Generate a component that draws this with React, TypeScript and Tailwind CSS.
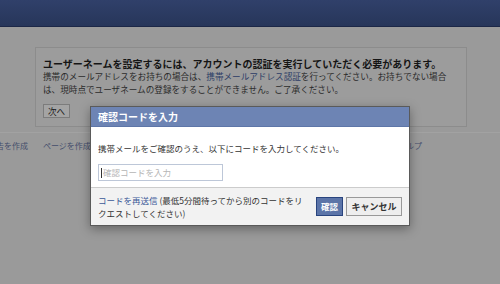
import React from 'react';

const font = { fontFamily: '"Noto Sans CJK JP", "Noto Sans", sans-serif' };

export default function App() {
  return (
    <div className="relative w-[500px] h-[284px] overflow-hidden bg-[#9a9a9a]" style={font}>
      {/* Top bar */}
      <div className="h-[27px] bg-gradient-to-b from-[#30406a] to-[#27365a] border-b border-[#1c2747]" />

      {/* Page content (dimmed) */}
      <div className="pt-[20px]">
        <div className="ml-[35px] w-[432px] h-[80px] border border-[#8c8c8c] bg-[#9c9c9c] pl-[7px] pt-[9px]">
          <div className="text-[10px] font-bold leading-[13px] text-[#151515] whitespace-nowrap">
            ユーザーネームを設定するには、アカウントの認証を実行していただく必要があります。
          </div>
          <div className="text-[8.6px] leading-[13px] text-[#2b2b2b] whitespace-nowrap">
            携帯のメールアドレスをお持ちの場合は、<span className="text-[#2d3d66]">携帯メールアドレス認証</span>を行ってください。お持ちでない場合
            <br />
            は、現時点でユーザネームの登録をすることができません。ご了承ください。
          </div>
          <div className="mt-[6px] inline-flex items-center h-[14px] px-[4px] border border-[#7c7c7c] bg-[#a4a4a4] text-[8.6px] leading-none text-[#1a1a1a]">
            次へ
          </div>
        </div>

        {/* Footer links */}
        <div className="mt-[5px] border-t border-[#a2a2a2] pt-[3px] h-[24px] flex items-center text-[8px] text-[#454e6c] whitespace-nowrap">
          <span className="ml-[-4px]">告を作成</span>
          <span className="ml-[15px]">ページを作成</span>
          <span className="ml-auto mr-[78px]">ヘルプ</span>
        </div>
      </div>

      {/* Dialog */}
      <div className="absolute left-[90px] top-[106px] w-[320px] border border-[#5a5a5a] bg-white shadow-[0_3px_10px_rgba(0,0,0,0.35)]">
        <div className="h-[20px] bg-[#6d84b4] border-b border-[#5e76a8] pl-[7px] flex items-center text-[10px] font-bold text-white">
          確認コードを入力
        </div>
        <div className="pl-[7px] pt-[15px] pb-[6px]">
          <div className="text-[8.5px] leading-[12px] text-[#333]">
            携帯メールをご確認のうえ、以下にコードを入力してください。
          </div>
          <div className="mt-[10px] w-[125px] h-[17px] border border-[#bdc7d8] flex items-center pl-[2px]">
            <span className="w-[1px] h-[10px] bg-[#333]" />
            <span className="ml-[1px] text-[8.5px] leading-none text-[#b5b5b5]">確認コードを入力</span>
          </div>
        </div>
        <div className="h-[38px] bg-[#f2f2f2] border-t border-[#cccccc] flex items-center pl-[7px] pr-[7px]">
          <div className="w-[212px] text-[8.5px] leading-[13px] text-[#333]">
            <span className="text-[#3b5998]">コードを再送信</span> (最低5分間待ってから別のコードをリクエストしてください)
          </div>
          <div className="ml-auto flex gap-[3px]">
            <div className="h-[19px] w-[27px] flex items-center justify-center bg-[#5b74a8] border border-[#29447e] text-[8.5px] font-bold text-white">
              確認
            </div>
            <div className="h-[19px] w-[56px] flex items-center justify-center bg-[#eeeeee] border border-[#999999] text-[9px] font-bold text-[#333]">
              キャンセル
            </div>
          </div>
        </div>
      </div>
    </div>
  );
}
